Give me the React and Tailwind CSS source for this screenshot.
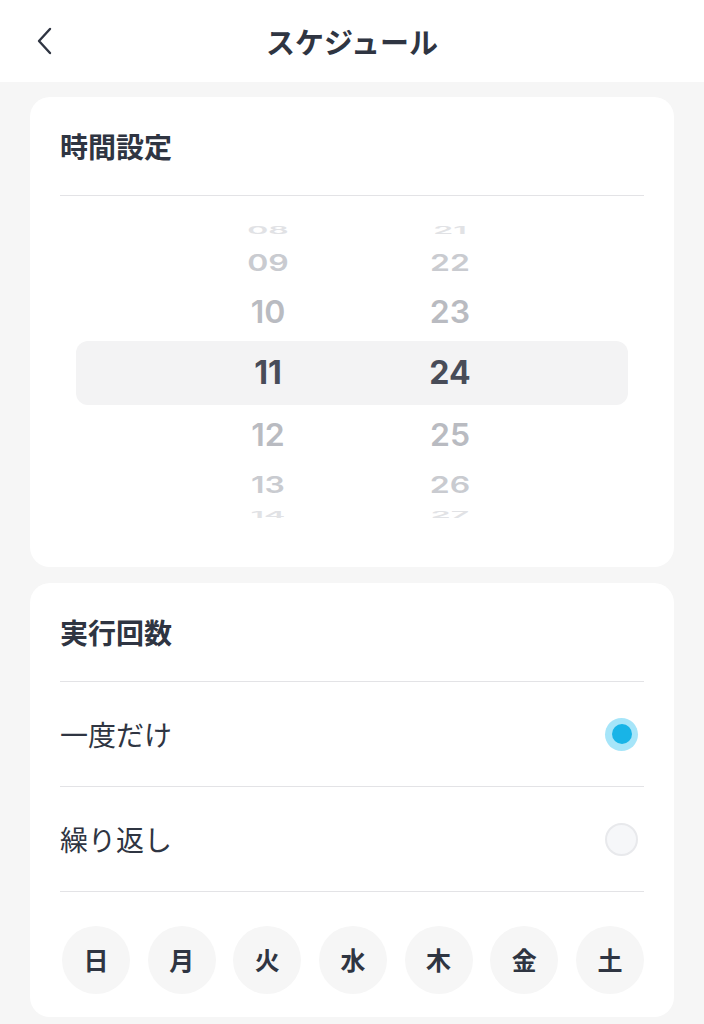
import { useState } from 'react';

const hours = ['08', '09', '10', '11', '12', '13', '14'];
const minutes = ['21', '22', '23', '24', '25', '26', '27'];

// wheel rows, from top to bottom: height, text style, 3D squash
const wheel = [
  { h: 'h-[28px]', text: 'text-[#e1e2e5] font-semibold', squash: 'scale-y-[0.32]' },
  { h: 'h-[38px]', text: 'text-[#c9cbd0] font-semibold', squash: 'scale-y-[0.72]' },
  { h: 'h-[59px]', text: 'text-[#b9bbc1] font-semibold', squash: 'scale-y-[0.97]' },
  { h: 'h-[64px]', text: 'text-[#484c58] font-bold', squash: '', selected: true },
  { h: 'h-[60px]', text: 'text-[#b9bbc1] font-semibold', squash: 'scale-y-[0.97]' },
  { h: 'h-[40px]', text: 'text-[#c9cbd0] font-semibold', squash: 'scale-y-[0.72]' },
  { h: 'h-[20px]', text: 'text-[#e1e2e5] font-semibold', squash: 'scale-y-[0.3]' },
];

const days = ['日', '月', '火', '水', '木', '金', '土'];

const Radio = ({ checked }) =>
  checked ? (
    <span className="flex items-center justify-center w-[33px] h-[33px] rounded-full bg-[#a6e5f9]">
      <span className="w-[20px] h-[20px] rounded-full bg-[#18b4e7]" />
    </span>
  ) : (
    <span className="w-[33px] h-[33px] rounded-full bg-[#f6f7f9] border-2 border-[#e8e9ec]" />
  );

const CardTitle = ({ children }) => (
  <div className="h-[99px] flex items-center border-b border-[#e3e3e6]">
    <h2 className="text-[28px] font-bold text-[#2f3542] leading-none">{children}</h2>
  </div>
);

export default function App() {
  const [mode, setMode] = useState('once');

  return (
    <div className="min-h-[1024px] bg-[#f6f6f6] font-['Noto_Sans_CJK_JP','Noto_Sans',sans-serif]">

      {/* Header */}
      <header className="h-[82px] bg-white flex items-center relative">
        <button className="absolute left-[30px] top-[26px] w-[28px] h-[30px] flex items-center justify-center">
          <svg width="18" height="28" viewBox="0 0 18 28" fill="none">
            <path d="M15 2 L4 14 L15 26" stroke="#2f3542" strokeWidth="2.4" strokeLinecap="round" strokeLinejoin="round" />
          </svg>
        </button>
        <h1 className="w-full text-center text-[29px] font-bold text-[#2f3542] leading-none">スケジュール</h1>
      </header>

      {/* 時間設定 */}
      <section className="mx-[30px] mt-[15px] bg-white rounded-[20px] px-[30px] pb-[42px]">
        <CardTitle>時間設定</CardTitle>
        <div className="pt-[20px] font-['Inter','Roboto',sans-serif]">
          {wheel.map((row, i) => (
            <div key={i}
              className={`${row.h} mx-[16px] flex items-center overflow-hidden ${row.selected ? 'bg-[#f3f3f4] rounded-[12px]' : ''}`}>
              <div className="flex gap-[62px] pl-[132px]">
                <span className={`w-[120px] text-center text-[32px] leading-none ${row.text} ${row.squash}`}>{hours[i]}</span>
                <span className={`w-[120px] text-center text-[32px] leading-none ${row.text} ${row.squash}`}>{minutes[i]}</span>
              </div>
            </div>
          ))}
        </div>
      </section>

      {/* 実行回数 */}
      <section className="mx-[30px] mt-[16px] bg-white rounded-[20px] px-[30px] pb-[23px]">
        <CardTitle>実行回数</CardTitle>
        <button onClick={() => setMode('once')}
          className="w-full h-[105px] flex items-center justify-between border-b border-[#e3e3e6] pr-[6px]">
          <span className="text-[28px] text-[#2f3542] leading-none">一度だけ</span>
          <Radio checked={mode === 'once'} />
        </button>
        <button onClick={() => setMode('repeat')}
          className="w-full h-[105px] flex items-center justify-between border-b border-[#e3e3e6] pr-[6px]">
          <span className="text-[28px] text-[#2f3542] leading-none">繰り返し</span>
          <Radio checked={mode === 'repeat'} />
        </button>
        <div className="pt-[34px] flex justify-between pl-[2px]">
          {days.map(d => (
            <span key={d}
              className="w-[68px] h-[68px] rounded-full bg-[#f6f6f6] flex items-center justify-center text-[25px] font-bold text-[#2f3542]">
              {d}
            </span>
          ))}
        </div>
      </section>
    </div>
  );
}
